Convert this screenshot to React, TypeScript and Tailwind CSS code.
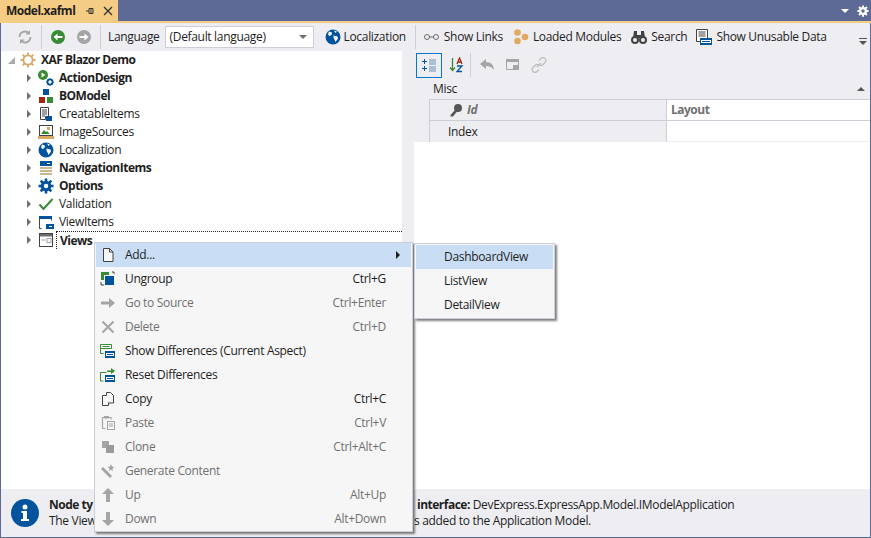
import type { ReactNode } from "react";

const NAVY = "#00539c";
const GREEN = "#388a34";
const GREY = "#a5a5a5";
const DARK = "#424242";

function Svg({ children, size = 16 }: { children: ReactNode; size?: number }) {
  return (
    <svg width={size} height={size} viewBox="0 0 16 16" className="shrink-0">
      {children}
    </svg>
  );
}

function Xml({ x, y }: { x: number; y: number }) {
  return (
    <>
      <rect x={x} y={y} width="10" height="7" fill={NAVY} />
      <rect x={x + 1} y={y + 2} width="8" height="3" fill="#fff" />
      <rect x={x + 2} y={y + 3} width="6" height="1" fill={NAVY} />
    </>
  );
}

const treeIcons: Record<string, ReactNode> = {
  gear: (
    <Svg>
      <circle cx="8" cy="8" r="4.600" fill="none" stroke="#d9a865" strokeWidth="1.800" />
      <path d="M8 .5v3M8 12.500v3M.5 8h3M12.500 8h3M2.700 2.700l2.100 2.100M11.200 11.200l2.100 2.100M13.300 2.700l-2.100 2.100M4.800 11.200l-2.100 2.100" stroke="#d9a865" strokeWidth="1.800" />
    </Svg>
  ),
  action: (
    <Svg>
      <circle cx="5" cy="5" r="5" fill={GREEN} />
      <path d="M3.500 2.500v5l4-2.500z" fill="#fff" />
      <circle cx="12" cy="12" r="2.600" fill="none" stroke={NAVY} strokeWidth="1.800" />
      <path d="M12 8.500v1.500M12 14v1.500M8.500 12H10M14 12h1.500M9.600 9.600l1 1M13.400 13.400l1 1M14.400 9.600l-1 1M10.600 13.400l-1 1" stroke={NAVY} strokeWidth="1.300" />
    </Svg>
  ),
  bo: (
    <Svg>
      <rect x="5" y="1" width="6" height="6" fill={NAVY} />
      <rect x="1" y="9" width="6" height="6" fill="#a1260d" />
      <rect x="9" y="9" width="6" height="6" fill={GREEN} />
    </Svg>
  ),
  creatable: (
    <Svg>
      <path d="M2.500 1.500h8v9h-3v3h-5z" fill="#fff" stroke={DARK} />
      <path d="M4 4h5M4 6h5M4 8h5M4 10h3" stroke={DARK} />
      <rect x="8" y="10" width="6" height="5" fill={NAVY} />
    </Svg>
  ),
  images: (
    <Svg>
      <rect x="1.500" y="1.500" width="13" height="10" fill="#fff" stroke={DARK} />
      <path d="M3 10l3-4 2 2 1-1 3 3z" fill={GREEN} />
      <rect x="9" y="3" width="3" height="3" fill="#d9a865" />
      <rect x="0" y="12" width="16" height="3" fill="#d9a865" />
    </Svg>
  ),
  globe: (
    <Svg>
      <circle cx="8" cy="8" r="7.500" fill={NAVY} />
      <path d="M4 2.500l3 1-.5 2.500L4.500 7 3 5.500zM8.500 6.500l4 1 .5 2-2.500 3.500-1-2.500-1-1.500zM9 1.500l3 1-1.500 1.500z" fill="#fff" />
    </Svg>
  ),
  nav: (
    <Svg>
      <rect x="2" y="1" width="12" height="5" fill={NAVY} />
      <rect x="9" y="3" width="3" height="1" fill="#fff" />
      <rect x="2" y="7" width="12" height="2" fill="#c9b58f" />
      <rect x="2" y="10" width="12" height="2" fill="#c9b58f" />
      <rect x="2" y="13" width="12" height="2" fill="#c9b58f" />
    </Svg>
  ),
  cog: (
    <Svg>
      <circle cx="8" cy="8" r="3.800" fill="none" stroke={NAVY} strokeWidth="3" />
      <path d="M8 .5v3M8 12.500v3M.5 8h3M12.500 8h3M2.700 2.700l2.100 2.100M11.200 11.200l2.100 2.100M13.300 2.700l-2.100 2.100M4.800 11.200l-2.100 2.100" stroke={NAVY} strokeWidth="2.600" />
    </Svg>
  ),
  check: (
    <Svg>
      <path d="M1.500 8.500l4 4.500 9-10" fill="none" stroke={GREEN} strokeWidth="2" />
    </Svg>
  ),
  viewItems: (
    <Svg>
      <path d="M1.500 11.500v-9h12v4" fill="none" stroke={DARK} />
      <rect x="1" y="2" width="13" height="3" fill={NAVY} />
      <path d="M3.500 14.500h-2v-3" fill="none" stroke={DARK} />
      <rect x="8" y="10" width="8" height="5" fill={NAVY} />
      <rect x="11" y="12" width="3" height="1" fill="#fff" />
    </Svg>
  ),
  views: (
    <Svg>
      <rect x="1.500" y="1.500" width="13" height="13" fill="#fff" stroke={DARK} />
      <rect x="2" y="2" width="12" height="2.500" fill="#6d6d6d" />
      <rect x="3.500" y="7.500" width="4" height="1" fill={GREY} />
      <rect x="9" y="6.500" width="4" height="4" fill="#fff" stroke={GREY} />
    </Svg>
  ),
};

const treeRows = [
  { label: "ActionDesign", icon: "action", bold: true },
  { label: "BOModel", icon: "bo", bold: true },
  { label: "CreatableItems", icon: "creatable" },
  { label: "ImageSources", icon: "images" },
  { label: "Localization", icon: "globe" },
  { label: "NavigationItems", icon: "nav", bold: true },
  { label: "Options", icon: "cog", bold: true },
  { label: "Validation", icon: "check" },
  { label: "ViewItems", icon: "viewItems" },
  { label: "Views", icon: "views", bold: true, focused: true },
];

const menuIcons: Record<string, ReactNode> = {
  add: (
    <Svg>
      <path d="M3.500 1.500h6l3.500 3.500v9.500h-9.500z" fill="#f6f6f6" stroke={DARK} />
      <path d="M9.500 1.500v3.500h3.500" fill="none" stroke={DARK} />
    </Svg>
  ),
  ungroup: (
    <Svg>
      <path d="M1 1h8v3H4v5H1z" fill={GREEN} />
      <rect x="5" y="5" width="9" height="9" fill={NAVY} />
      <path d="M1 11v3h3M12 1h2v2" fill="none" stroke={DARK} />
    </Svg>
  ),
  goto: (
    <Svg>
      <path d="M1 6.500h8V3l6 5-6 5V9.500H1z" fill={GREY} />
    </Svg>
  ),
  del: (
    <Svg>
      <path d="M2.500 2.500l11 11M13.500 2.500l-11 11" stroke={GREY} strokeWidth="2" />
    </Svg>
  ),
  diff: (
    <Svg>
      <path d="M.5 1.500h11v4H.5z" fill="#fff" stroke={GREEN} />
      <path d="M2.500 3.500h7" stroke={GREEN} />
      <path d="M.5 5.500v5h3" fill="none" stroke={GREEN} />
      <Xml x={5} y={8} />
    </Svg>
  ),
  reset: (
    <Svg>
      <path d="M.5 14V5.500h6" fill="none" stroke={GREEN} />
      <path d="M7 3.500h4V1l4 3-4 3V5H7z" fill={GREEN} />
      <path d="M.5 14h3" fill="none" stroke={GREEN} />
      <Xml x={5} y={8} />
    </Svg>
  ),
  copy: (
    <Svg>
      <path d="M2.500 4.500h6v10h-6z" fill="#f6f6f6" stroke={DARK} />
      <path d="M6.500 4V1.500h4l3 3v7.500h-5" fill="#f6f6f6" stroke={DARK} />
    </Svg>
  ),
  paste: (
    <Svg>
      <path d="M5.500 13.500h-3v-11h2M9 2.500h2v2" fill="none" stroke={GREY} strokeWidth="1.200" />
      <rect x="4" y="1" width="5" height="2.500" fill={GREY} />
      <rect x="7.500" y="6.500" width="7" height="8" fill="#f6f6f6" stroke={GREY} />
      <path d="M9 9h4M9 11h4" stroke={GREY} />
    </Svg>
  ),
  clone: (
    <Svg>
      <rect x="2" y="2" width="7" height="7" fill={GREY} />
      <rect x="6" y="6" width="8" height="8" fill="#9b9b9b" />
    </Svg>
  ),
  wand: (
    <Svg>
      <path d="M2 5l9 9" stroke={GREY} strokeWidth="3" />
      <path d="M11 1l1 2.500 2.500.5-2 1.500.5 2.500-2-1.300L9 8l.5-2.500-2-1.500L10 3.500z" fill={GREY} />
    </Svg>
  ),
  up: (
    <Svg>
      <path d="M8 1l6 6h-4v8H6V7H2z" fill={GREY} />
    </Svg>
  ),
  down: (
    <Svg>
      <path d="M8 15l6-6h-4V1H6v8H2z" fill={GREY} />
    </Svg>
  ),
};

const menuRows = [
  { label: "Add...", icon: "add", active: true, arrow: true },
  { label: "Ungroup", icon: "ungroup", keys: "Ctrl+G" },
  { label: "Go to Source", icon: "goto", keys: "Ctrl+Enter", off: true },
  { label: "Delete", icon: "del", keys: "Ctrl+D", off: true },
  { label: "Show Differences (Current Aspect)", icon: "diff" },
  { label: "Reset Differences", icon: "reset" },
  { label: "Copy", icon: "copy", keys: "Ctrl+C" },
  { label: "Paste", icon: "paste", keys: "Ctrl+V", off: true },
  { label: "Clone", icon: "clone", keys: "Ctrl+Alt+C", off: true },
  { label: "Generate Content", icon: "wand", off: true },
  { label: "Up", icon: "up", keys: "Alt+Up", off: true },
  { label: "Down", icon: "down", keys: "Alt+Down", off: true },
];

function Sep() {
  return <div className="w-px h-[24px] bg-[#ccced8] shrink-0" />;
}

function Expander() {
  return <div className="w-0 h-0 border-y-[4px] border-y-transparent border-l-[4px] border-l-[#717171] shrink-0" />;
}

function Toolbar() {
  return (
    <div className="h-[28px] bg-[#eeeef2] flex items-center text-[12px] text-[#1e1e1e] shrink-0 pl-[3px]">
      <div className="w-[4px] h-[20px] mr-[9px] bg-[radial-gradient(#a8a8a8_0.6px,transparent_0.7px)] bg-[length:2px_2px]" />
      <Svg>
        <path d="M13.500 8a5.500 5.500 0 0 1-9.500 3.700M2.500 8A5.500 5.500 0 0 1 12 4.300" fill="none" stroke={GREY} strokeWidth="1.800" />
        <path d="M13 1v4.500H8.500zM3 15v-4.500h4.500z" fill={GREY} />
      </Svg>
      <div className="w-[8px]" />
      <Sep />
      <div className="w-[8px]" />
      <Svg>
        <circle cx="8" cy="8" r="7" fill={GREEN} />
        <path d="M3.500 8l4-3.500V7h5v2h-5v2.500z" fill="#fff" />
      </Svg>
      <div className="w-[10px]" />
      <Svg>
        <circle cx="8" cy="8" r="7" fill={GREY} />
        <path d="M12.500 8l-4-3.500V7h-5v2h5v2.500z" fill="#fff" />
      </Svg>
      <div className="w-[8px]" />
      <Sep />
      <span className="ml-[7px]">Language</span>
      <div className="ml-[5px] w-[149px] h-[22px] bg-white border border-[#ccced8] flex items-center justify-between pl-[4px] pr-[6px]">
        <span>(Default language)</span>
        <div className="w-0 h-0 border-x-[4px] border-x-transparent border-t-[4px] border-t-[#717171]" />
      </div>
      <div className="ml-[11px] flex items-center gap-[3px]">
        {treeIcons.globe}
        <span>Localization</span>
      </div>
      <div className="w-[9px]" />
      <Sep />
      <div className="ml-[7px] flex items-center gap-[4px]">
        <svg width="17" height="16" viewBox="0 0 17 16" className="shrink-0">
          <circle cx="4" cy="8" r="2.500" fill="none" stroke="#6d6d6d" />
          <circle cx="13" cy="8" r="2.500" fill="none" stroke="#6d6d6d" />
          <path d="M6 8h5" stroke="#6d6d6d" />
        </svg>
        <span>Show Links</span>
      </div>
      <div className="ml-[10px] flex items-center gap-[4px]">
        <svg width="16" height="16" viewBox="0 0 16 16" className="shrink-0">
          <circle cx="4.500" cy="3.500" r="3.300" fill="#e0aa62" />
          <circle cx="4.500" cy="12" r="3.300" fill="#e0aa62" />
          <circle cx="12" cy="8" r="3.300" fill="#e0aa62" />
        </svg>
        <span>Loaded Modules</span>
      </div>
      <div className="ml-[10px] flex items-center gap-[4px]">
        <svg width="16" height="16" viewBox="0 0 16 16" className="shrink-0">
          <circle cx="4" cy="11" r="3" fill="none" stroke={DARK} strokeWidth="2" />
          <circle cx="12" cy="11" r="3" fill="none" stroke={DARK} strokeWidth="2" />
          <path d="M3 2h3v7H2zM10 2h3l1 7h-4zM6 6h4v3H6z" fill={DARK} />
        </svg>
        <span>Search</span>
      </div>
      <div className="ml-[9px] flex items-center gap-[4px]">
        <svg width="16" height="18" viewBox="0 0 16 18" className="shrink-0">
          <path d="M.5 1.500h11v12H.5z" fill="#fff" stroke={DARK} />
          <path d="M2.500 4h7M2.500 6h7M2.500 8h7" stroke={DARK} />
          <rect x="4" y="10" width="12" height="7" fill={NAVY} />
          <rect x="5" y="12" width="10" height="3" fill="#fff" />
          <rect x="6" y="13" width="8" height="1" fill={NAVY} />
        </svg>
        <span>Show Unusable Data</span>
      </div>
      <div className="ml-auto mr-[3px] mt-[8px] flex flex-col items-center gap-[2px]">
        <div className="w-[8px] h-px bg-[#555]" />
        <div className="w-0 h-0 border-x-[4px] border-x-transparent border-t-[4px] border-t-[#555]" />
      </div>
    </div>
  );
}

function Tree() {
  return (
    <div className="w-[401px] shrink-0 bg-white text-[12px] text-[#1e1e1e]">
      <div className="h-[18px] flex items-center pl-[7px]">
        <div className="w-0 h-0 border-l-[7px] border-l-transparent border-b-[7px] border-b-[#717171]/60 shrink-0" />
        <div className="ml-[5px]">{treeIcons.gear}</div>
        <span className="ml-[5px] font-bold tracking-[-0.5px]">XAF Blazor Demo</span>
      </div>
      {treeRows.map((r) => (
        <div key={r.label} className="h-[18px] flex items-center pl-[26px]">
          <Expander />
          <div className="ml-[7px]">{treeIcons[r.icon]}</div>
          {r.focused ? (
            <span className="ml-[2px] pl-[3px] flex-1 h-[18px] font-bold tracking-[-0.5px] border-t border-l border-dotted border-[#222] leading-[17px]">
              {r.label}
            </span>
          ) : (
            <span className={r.bold ? "ml-[5px] font-bold tracking-[-0.5px]" : "ml-[5px]"}>{r.label}</span>
          )}
        </div>
      ))}
    </div>
  );
}

function Properties() {
  return (
    <div className="flex-1 flex bg-[#eeeef2] text-[12px] text-[#1e1e1e] min-w-0">
      <div className="w-[12px] shrink-0" />
      <div className="flex-1 bg-white flex flex-col min-w-0">
        <div className="h-[28px] bg-[#eeeef2] flex items-center pl-[2px]">
          <div className="w-[26px] h-[25px] border border-[#007acc] flex items-center justify-center">
            <Svg>
              <path d="M1 4.500h5M3.500 2v5M1 11.500h5M3.500 9v5" stroke={NAVY} />
              <path d="M8 3h7M8 5h7M8 7h7M8 10h7M8 12h7M8 14h7" stroke="#6a8fb5" />
            </Svg>
          </div>
          <div className="ml-[7px]">
            <Svg>
              <path d="M3.500 1v12M1 10.500l2.500 3 2.500-3" fill="none" stroke={GREEN} strokeWidth="1.300" />
              <path d="M8 7l2.500-6 2.500 6M9 5h3" fill="none" stroke="#a1260d" strokeWidth="1.300" />
              <path d="M8 9h5l-5 5.500h5" fill="none" stroke={NAVY} strokeWidth="1.300" />
            </Svg>
          </div>
          <div className="ml-[5px]">
            <Sep />
          </div>
          <div className="ml-[8px]">
            <Svg>
              <path d="M7 2L1 7l6 5V9c3 0 6 1 8 4 0-5-3-8-8-8z" fill={GREY} />
            </Svg>
          </div>
          <div className="ml-[10px]">
            <Svg>
              <path d="M1.500 2.500h12v10h-12z" fill="none" stroke={GREY} />
              <rect x="1" y="2" width="13" height="3" fill={GREY} />
              <rect x="8" y="8" width="6" height="5" fill={GREY} />
            </Svg>
          </div>
          <div className="ml-[10px]">
            <Svg>
              <path d="M6 10l4-4M8 3.500l2-2a2.500 2.500 0 0 1 4 4l-2.500 2.500a2.500 2.500 0 0 1-3 0M8 12.500l-2 2a2.500 2.500 0 0 1-4-4L4.500 8a2.500 2.500 0 0 1 3 0" fill="none" stroke="#bdbdbd" strokeWidth="1.200" />
            </Svg>
          </div>
        </div>
        <div className="h-[20px] bg-[#eeeef2] flex items-center justify-between pl-[19px] pr-[5px]">
          <span>Misc</span>
          <div className="w-0 h-0 border-x-[4px] border-x-transparent border-b-[4px] border-b-[#555]" />
        </div>
        <div className="flex h-[21px]">
          <div className="w-[15px] bg-[#eeeef2] shrink-0" />
          <div className="w-[238px] shrink-0 bg-[#eeeef2] border-l border-t border-r border-[#ccced8] flex items-center pl-[19px] text-[#717171] font-bold italic">
            <svg width="14" height="14" viewBox="0 0 14 14" className="mr-[4px]">
              <circle cx="9" cy="5" r="4" fill="#555" />
              <path d="M6.500 6.500L1.500 12v1.500h2.500L8 8.500z" fill="#555" />
            </svg>
            Id
          </div>
          <div className="flex-1 flex items-center border-t border-[#ccced8] pl-[4px] text-[#717171] font-bold tracking-[-0.5px]">Layout</div>
        </div>
        <div className="flex h-[22px]">
          <div className="w-[15px] bg-[#eeeef2] shrink-0" />
          <div className="w-[238px] shrink-0 bg-[#eeeef2] border-l border-t border-r border-[#ccced8] flex items-center pl-[18px]">Index</div>
          <div className="flex-1 border-t border-b border-t-[#ccced8] border-b-[#eeeef2]" />
        </div>
      </div>
    </div>
  );
}

function InfoBar() {
  return (
    <div className="h-[48px] bg-[#eeeef2] flex items-center shrink-0 text-[12px] text-[#1e1e1e] leading-[16px]">
      <svg width="28" height="28" viewBox="0 0 28 28" className="ml-[10px] shrink-0">
        <circle cx="14" cy="14" r="14" fill={NAVY} />
        <circle cx="14" cy="8" r="2.500" fill="#fff" />
        <path d="M10.500 12h5.500v8h2v2h-8v-2h2v-6h-1.500z" fill="#fff" />
      </svg>
      {/* the popup covers the middle of both lines, so only the two visible ends are laid out */}
      <div className="ml-[10px] w-[45px] shrink-0 whitespace-nowrap">
        <div className="font-bold tracking-[-0.5px]">Node ty</div>
        <div>The View</div>
      </div>
      <div className="ml-[320px] whitespace-nowrap">
        <div className="pl-[3px]">
          <b className="tracking-[-0.5px]">interface:</b> DevExpress.ExpressApp.Model.IModelApplication
        </div>
        <div>s added to the Application Model.</div>
      </div>
    </div>
  );
}

function PopupMenu() {
  return (
    <div className="absolute left-[94px] top-[242px] w-[319px] h-[290px] bg-[#f6f6f6] border border-[#ccced8] shadow-[2px_2px_2px_rgba(0,0,0,0.5)] text-[12px] px-px">
      {menuRows.map((m) => (
        <div
          key={m.label}
          className={
            m.active
              ? "h-[24px] flex items-center bg-[#c9def5] text-[#1e1e1e]"
              : m.off
                ? "h-[24px] flex items-center text-[#717171]"
                : "h-[24px] flex items-center text-[#1e1e1e]"
          }
        >
          <div className="w-[29px] pl-[4px] flex shrink-0">{menuIcons[m.icon]}</div>
          <span className="flex-1">{m.label}</span>
          {m.keys && <span className="mr-[25px]">{m.keys}</span>}
          {m.arrow && (
            <div className="mr-[11px] w-0 h-0 border-y-[4px] border-y-transparent border-l-[4px] border-l-[#1e1e1e]" />
          )}
        </div>
      ))}
    </div>
  );
}

function SubMenu() {
  return (
    <div className="absolute left-[414px] top-[243px] w-[141px] h-[76px] bg-[#f6f6f6] border border-[#ccced8] shadow-[2px_2px_2px_rgba(0,0,0,0.5)] text-[12px] text-[#1e1e1e] p-px">
      {["DashboardView", "ListView", "DetailView"].map((s, i) => (
        <div key={s} className={i === 0 ? "h-[24px] flex items-center pl-[28px] bg-[#c9def5]" : "h-[24px] flex items-center pl-[28px]"}>
          {s}
        </div>
      ))}
    </div>
  );
}

export default function App() {
  return (
    <div className="relative w-[871px] h-[538px] overflow-hidden bg-[#5c6a95] font-['Open_Sans','Noto_Sans',sans-serif] tracking-[-0.32px] flex flex-col">
      <div className="h-[21px] flex items-stretch shrink-0">
        <div className="w-[118px] bg-[#f5cc84] flex items-center pl-[6px] text-[12px] font-bold tracking-[-0.5px] text-[#1e1e1e]">
          Model.xafml
          <svg width="10" height="10" viewBox="0 0 10 10" className="ml-[10px]">
            <path d="M1 5h3M4 2.500v5h4v-5zM6 2.500v5" fill="none" stroke="#333" />
          </svg>
          <svg width="10" height="10" viewBox="0 0 10 10" className="ml-[8px]">
            <path d="M1 1l8 8M9 1l-8 8" stroke="#333" strokeWidth="1.300" />
          </svg>
        </div>
        <div className="ml-auto flex items-center gap-[8px] pr-[2px]">
          <div className="w-0 h-0 border-x-[4px] border-x-transparent border-t-[4px] border-t-white" />
          <svg width="12" height="12" viewBox="0 0 16 16">
            <circle cx="8" cy="8" r="3.800" fill="none" stroke="#fff" strokeWidth="3" />
            <path d="M8 .5v3M8 12.500v3M.5 8h3M12.500 8h3M2.700 2.700l2.100 2.100M11.200 11.200l2.100 2.100M13.300 2.700l-2.100 2.100M4.800 11.200l-2.100 2.100" stroke="#fff" strokeWidth="2.600" />
          </svg>
        </div>
      </div>
      <div className="h-[2px] bg-[#f5cc84] shrink-0" />
      <div className="flex-1 flex flex-col px-px pb-px min-h-0">
        <Toolbar />
        <div className="flex-1 flex min-h-0 bg-white">
          <Tree />
          <Properties />
        </div>
        <InfoBar />
      </div>
      <PopupMenu />
      <SubMenu />
    </div>
  );
}
